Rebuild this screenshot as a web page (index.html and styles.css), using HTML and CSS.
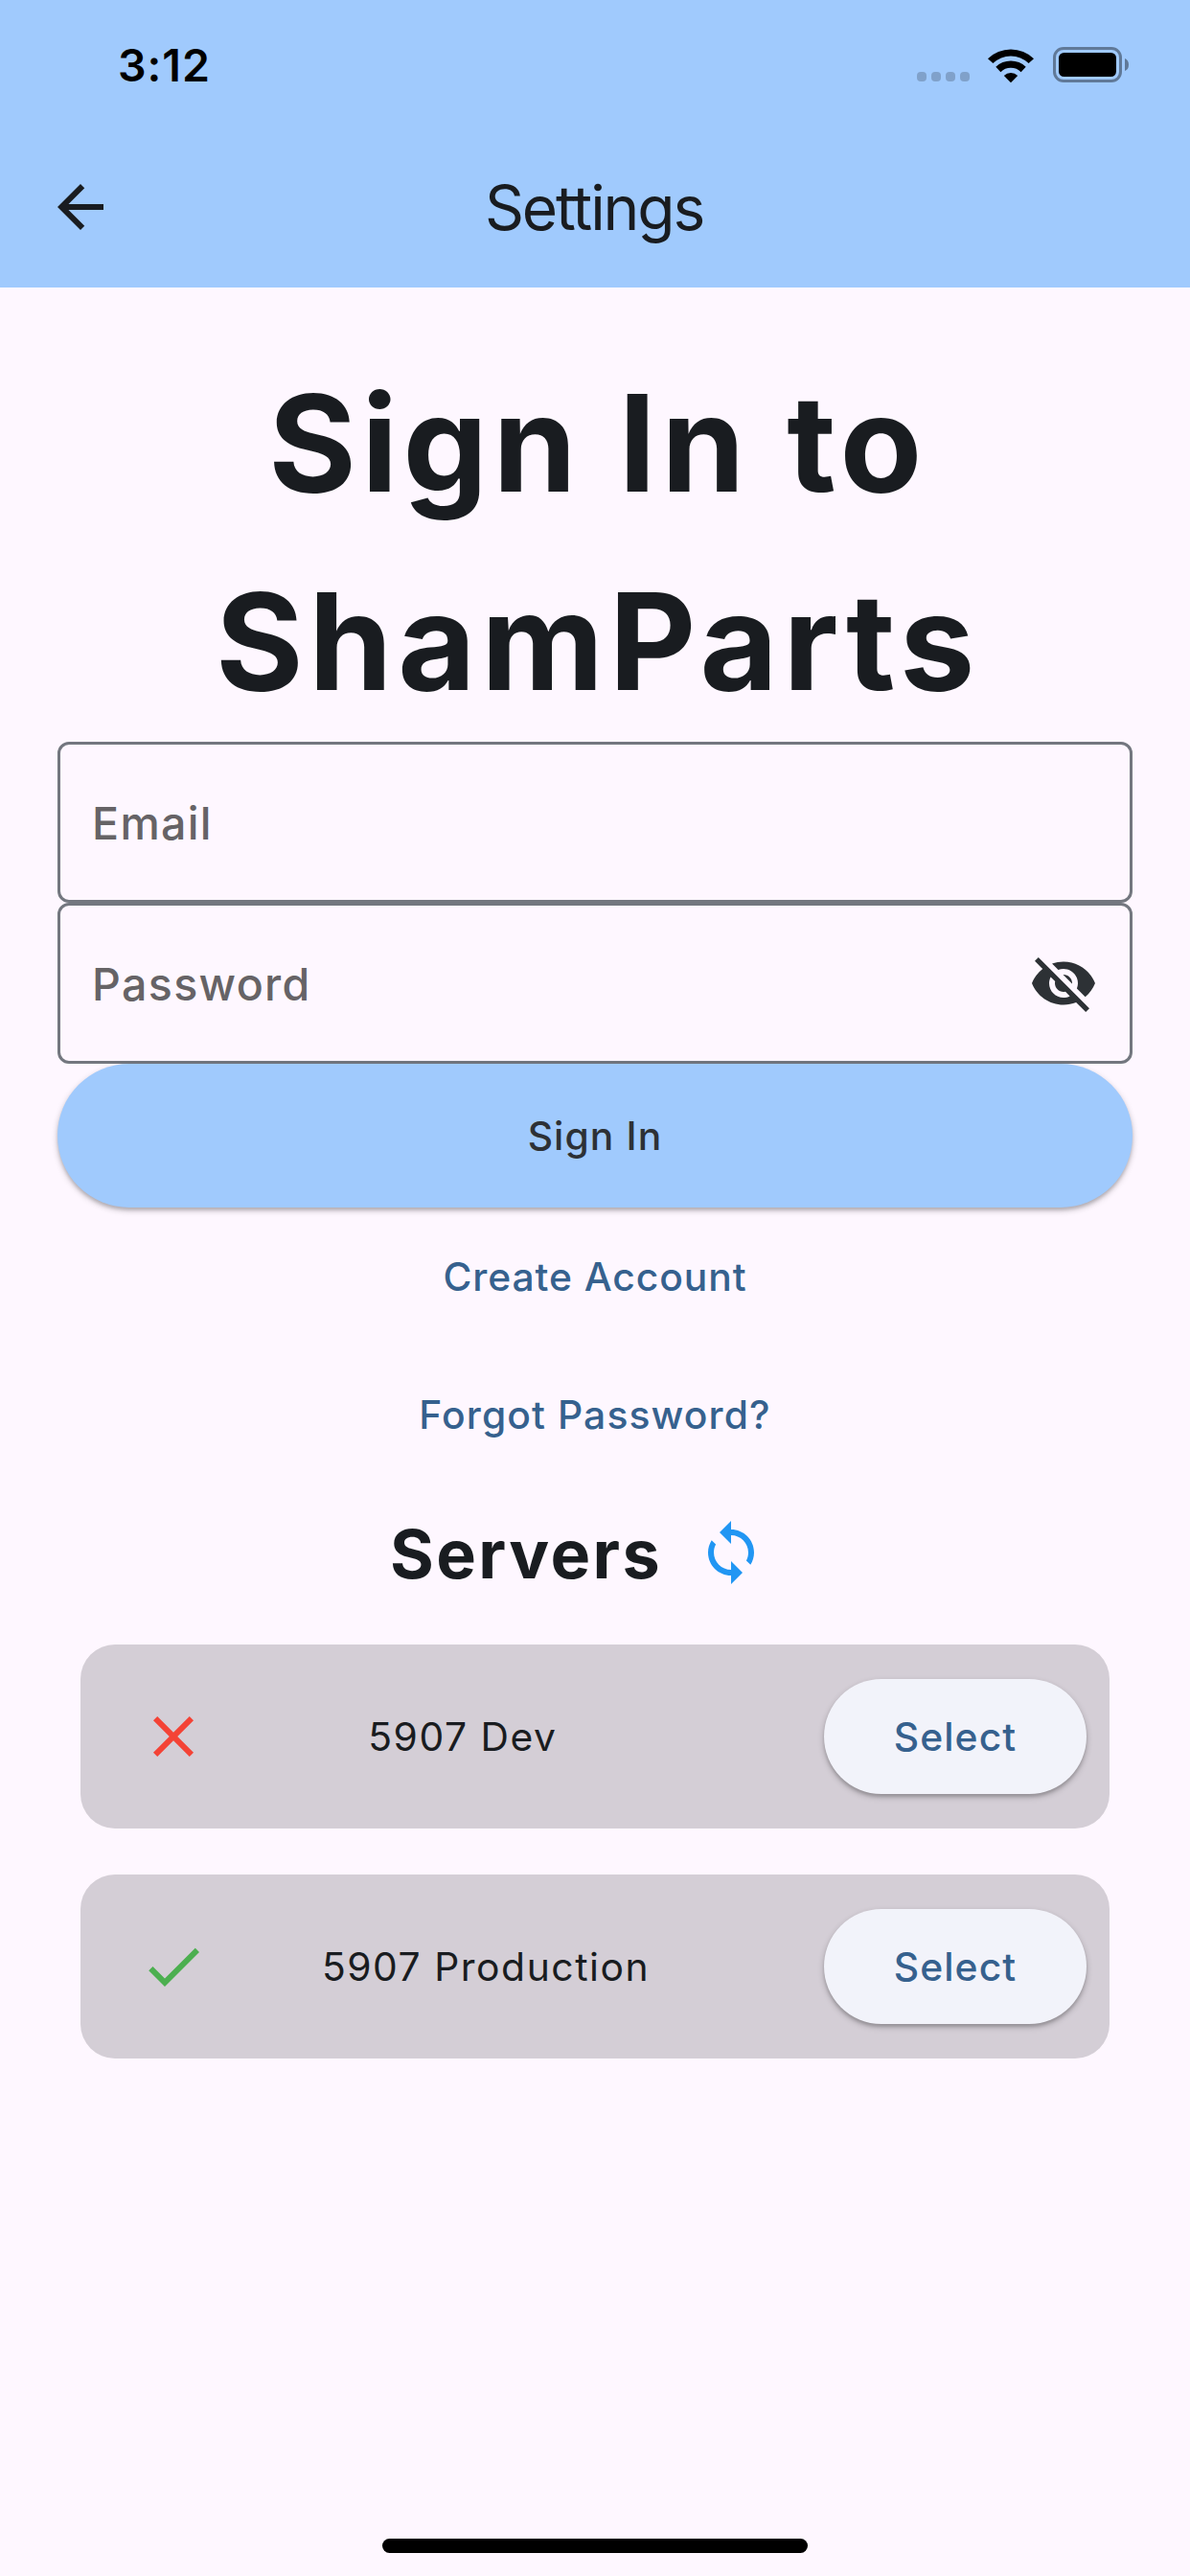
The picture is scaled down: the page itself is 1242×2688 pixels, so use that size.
FILE: index.html
```html
<!DOCTYPE html>
<html lang="en">
<head>
<meta charset="utf-8">
<title>Settings</title>
<link rel="stylesheet" href="styles.css">
</head>
<body>
<div class="screen">
  <header class="header">
    <div class="status">
      <span class="time">3:12</span>
      <div class="indicators">
        <div class="dots"><i></i><i></i><i></i><i></i></div>
        <svg class="wifi" width="50" height="38" viewBox="0 0 50 38">
          <path d="M1 12.2A34.5 34.5 0 0 1 49 12.2L43.6 17.1A26.6 26.6 0 0 0 6.4 17.1Z"/>
          <path d="M9.3 20.8A22.5 22.5 0 0 1 40.7 20.8L35.6 26.2A15 15 0 0 0 14.4 26.2Z"/>
          <path d="M17.8 29.9A10.5 10.5 0 0 1 32.2 29.9L25 37.3Z"/>
        </svg>
        <svg class="battery" width="80" height="37" viewBox="0 0 80 37">
          <rect x="1.5" y="1.5" width="69" height="34" rx="9.5" fill="none" stroke="#000" stroke-opacity=".4" stroke-width="3"/>
          <rect x="6" y="6" width="60" height="25" rx="5.5"/>
          <path d="M75 12Q79 13.5 79 18.5Q79 23.5 75 25Z" fill-opacity=".4"/>
        </svg>
      </div>
    </div>
    <div class="toolbar">
      <svg class="icon" viewBox="0 0 24 24"><path d="M20 11H7.83l5.59-5.59L12 4l-8 8 8 8 1.41-1.41L7.83 13H20v-2z"/></svg>
      <span class="title">Settings</span>
    </div>
  </header>
  <main class="content">
    <h1 class="heading"><span class="line-a">Sign In to</span> <span class="line-b">ShamParts</span></h1>
    <div class="field"><span class="hint">Email</span></div>
    <div class="field">
      <span class="hint">Password</span>
      <svg class="icon eye" viewBox="0 0 24 24"><path d="M12 7c2.76 0 5 2.24 5 5 0 .65-.13 1.26-.36 1.83l2.92 2.92c1.51-1.26 2.7-2.89 3.43-4.75-1.73-4.39-6-7.5-11-7.5-1.4 0-2.74.25-3.98.7l2.16 2.16C10.74 7.13 11.35 7 12 7zM2 4.27l2.28 2.28.46.46C3.08 8.3 1.78 10.02 1 12c1.73 4.39 6 7.5 11 7.5 1.55 0 3.03-.3 4.38-.84l.42.42L19.73 22 21 20.73 3.27 3 2 4.27zM7.53 9.8l1.55 1.55c-.05.21-.08.43-.08.65 0 1.66 1.34 3 3 3 .22 0 .44-.03.65-.08l1.55 1.55c-.67.33-1.41.53-2.2.53-2.76 0-5-2.24-5-5 0-.79.2-1.53.53-2.2zm4.31-.78l3.15 3.15.02-.16c0-1.66-1.34-3-3-3l-.17.01z"/></svg>
    </div>
    <div class="button primary">Sign In</div>
    <div class="link">Create Account</div>
    <div class="link forgot">Forgot Password?</div>
    <div class="servers-head">
      <h2 class="servers-title">Servers</h2>
      <div class="refresh"><svg class="icon sync" viewBox="0 0 24 24"><path d="M12 4V1L8 5l4 4V6c3.31 0 6 2.69 6 6 0 1.01-.25 1.97-.7 2.8l1.46 1.46C19.54 15.03 20 13.57 20 12c0-4.42-3.58-8-8-8zm0 14c-3.31 0-6-2.69-6-6 0-1.01.25-1.97.7-2.8L5.24 7.74C4.46 8.97 4 10.43 4 12c0 4.42 3.58 8 8 8v3l4-4-4-4v3z"/></svg></div>
    </div>
    <div class="servers">
      <div class="server">
        <svg class="icon offline" viewBox="0 0 24 24"><path d="M19 6.41L17.59 5 12 10.59 6.41 5 5 6.41 10.59 12 5 17.59 6.41 19 12 13.41 17.59 19 19 17.59 13.41 12z"/></svg>
        <span class="name">5907 Dev</span>
        <div class="button select">Select</div>
      </div>
      <div class="server">
        <svg class="icon online" viewBox="0 0 24 24"><path d="M9 16.17L4.83 12l-1.42 1.41L9 19 21 7l-1.41-1.41z"/></svg>
        <span class="name">5907 Production</span>
        <div class="button select">Select</div>
      </div>
    </div>
  </main>
  <div class="home-bar"></div>
</div>
</body>
</html>
```
FILE: styles.css
```css
* { box-sizing: border-box; }

body {
  margin: 0;
  background: #fef7ff;
  color: #191c20;
  font-family: Inter, "Liberation Sans", sans-serif;
}

.screen {
  width: 1242px;
  height: 2688px;
  display: flex;
  flex-direction: column;
  overflow: hidden;
}

.icon {
  display: block;
  flex: none;
  width: 72px;
  height: 72px;
  fill: currentColor;
}

/* Status bar and toolbar */
.header {
  height: 300px;
  background: #a0cafd;
}

.status {
  height: 132px;
  padding: 0 63px 0 123px;
  display: flex;
  justify-content: space-between;
}

.time {
  color: #000;
  font-size: 46.5px;
  font-weight: 600;
  letter-spacing: 0.98px;
  line-height: 136px;
}

.indicators {
  display: flex;
  align-items: flex-start;
  padding-top: 49px;
}

.dots {
  display: flex;
  gap: 5px;
  padding-top: 26px;
  margin-right: 18px;
}

.dots i {
  width: 10px;
  height: 10px;
  border-radius: 4px;
  background: rgba(0, 0, 0, 0.2);
}

.wifi { margin-right: 19px; }

.toolbar {
  height: 168px;
  padding: 0 122px 0 48px;
  display: flex;
  align-items: center;
}

.title {
  flex: 1;
  padding-top: 1px;
  text-align: center;
  font-size: 64px;
  letter-spacing: -2.1px;
}

/* Sign-in form */
.content {
  flex: 1;
  padding: 0 60px;
}

.heading {
  margin: 0;
  padding: 59px 0 1px 6px;
  font-size: 140px;
  font-weight: 700;
  line-height: 207px;
  text-align: center;
}

.heading span { display: block; }
.line-a { letter-spacing: 5.38px; }
.line-b { letter-spacing: 5.74px; }

.field {
  height: 168px;
  padding: 0 33px;
  display: flex;
  align-items: center;
  justify-content: space-between;
  border: 3px solid #73777f;
  border-radius: 12px;
}

.hint {
  padding-top: 2px;
  color: #666366;
  font-size: 46.5px;
  font-weight: 500;
  letter-spacing: 1.35px;
}

.eye { color: #2d3135; }

.button {
  display: flex;
  align-items: center;
  justify-content: center;
  font-size: 40.8px;
  font-weight: 500;
  letter-spacing: 1.1px;
  box-shadow: 0 3px 6px rgba(0, 0, 0, 0.25), 0 3px 3px rgba(0, 0, 0, 0.1);
}

.primary {
  height: 150px;
  border-radius: 75px;
  background: #a0cafd;
  color: #2d3135;
}

.link {
  height: 144px;
  color: #36618e;
  font-size: 40.8px;
  font-weight: 500;
  letter-spacing: 0.93px;
  line-height: 144px;
  text-align: center;
}

.forgot { letter-spacing: 1.11px; }

/* Server list */
.servers-head {
  height: 144px;
  display: flex;
  align-items: center;
  justify-content: center;
}

.servers-title {
  margin: 0;
  padding-top: 3px;
  font-size: 70px;
  font-weight: 700;
  letter-spacing: 2.4px;
}

.refresh { padding: 36px; }
.sync { color: #2196f3; }

.servers {
  padding: 24px;
  display: grid;
  gap: 48px;
}

.server {
  height: 192px;
  padding: 0 24px 0 61px;
  display: grid;
  grid-template-columns: 100px 1fr auto 2fr 274px;
  align-items: center;
  border-radius: 36px;
  background: #d4ced6;
}

.name {
  grid-column: 3;
  font-size: 40.8px;
  letter-spacing: 1.55px;
}

.offline { color: #f44336; }
.online { color: #4caf50; }

.select {
  grid-column: 5;
  height: 120px;
  border-radius: 60px;
  background: #f2f3fa;
  color: #36618e;
}

.home-bar {
  align-self: center;
  width: 444px;
  height: 15px;
  margin-bottom: 24px;
  border-radius: 8px;
  background: #000;
}
```
